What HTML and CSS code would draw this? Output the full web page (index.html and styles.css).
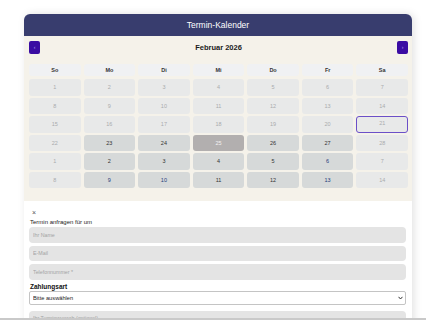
FILE: index.html
```html
<!DOCTYPE html>
<html>
<head>
    <title>Termin-Kalender</title>
    <meta name="viewport" content="width=device-width, initial-scale=1.0">
    <link rel="stylesheet" href="styles.css">
</head>
<body>
    <div class="booking">
        <div class="booking-header">Termin-Kalender</div>

        <!-- Calendar -->
        <div class="calendar">
            <div class="cal-nav">
                <button class="nav-btn">&lsaquo;</button>
                <span class="cal-title">Februar 2026</span>
                <button class="nav-btn">&rsaquo;</button>
            </div>
            <div class="cal-grid">
                <div class="day-head">So</div>
                <div class="day-head">Mo</div>
                <div class="day-head">Di</div>
                <div class="day-head">Mi</div>
                <div class="day-head">Do</div>
                <div class="day-head">Fr</div>
                <div class="day-head">Sa</div>

                <div class="day">1</div>
                <div class="day">2</div>
                <div class="day">3</div>
                <div class="day">4</div>
                <div class="day">5</div>
                <div class="day">6</div>
                <div class="day">7</div>

                <div class="day">8</div>
                <div class="day">9</div>
                <div class="day">10</div>
                <div class="day">11</div>
                <div class="day">12</div>
                <div class="day">13</div>
                <div class="day">14</div>

                <div class="day">15</div>
                <div class="day">16</div>
                <div class="day">17</div>
                <div class="day">18</div>
                <div class="day">19</div>
                <div class="day">20</div>
                <div class="day today">21</div>

                <div class="day">22</div>
                <div class="day open">23</div>
                <div class="day open">24</div>
                <div class="day selected">25</div>
                <div class="day open">26</div>
                <div class="day open">27</div>
                <div class="day">28</div>

                <div class="day">1</div>
                <div class="day open">2</div>
                <div class="day open">3</div>
                <div class="day open">4</div>
                <div class="day open">5</div>
                <div class="day open blue">6</div>
                <div class="day">7</div>

                <div class="day">8</div>
                <div class="day open blue">9</div>
                <div class="day open blue">10</div>
                <div class="day open">11</div>
                <div class="day open">12</div>
                <div class="day open blue">13</div>
                <div class="day">14</div>
            </div>
        </div>

        <!-- Request form -->
        <div class="request">
            <span class="close">&times;</span>
            <p class="request-title">Termin anfragen für um</p>
            <input class="field" type="text" placeholder="Ihr Name">
            <input class="field" type="text" placeholder="E-Mail">
            <input class="field" type="text" placeholder="Telefonnummer *">
            <label class="field-label">Zahlungsart</label>
            <div class="select-wrap">
                <select class="select">
                    <option>Bitte auswählen</option>
                </select>
                <svg class="select-arrow" width="5" height="4" viewBox="0 0 5 4">
                    <path d="M0.5 0.8 L2.5 3 L4.5 0.8" fill="none" stroke="#333" stroke-width="1"/>
                </svg>
            </div>
            <input class="field" type="text" placeholder="Ihr Terminwunsch (optional)">
        </div>
    </div>

    <div class="page-edge"></div>
</body>
</html>
```

FILE: styles.css
```css
:root {
    --navy: #383d6e;
    --purple: #3a0ca3;
    --beige: #f5f2ea;
}

body {
    margin: 0;
    font-family: "Liberation Sans", Arial, sans-serif;
    background: white;
}

.booking {
    margin: 14px 14px 0 24px;
    border-radius: 6px 6px 0 0;
    overflow: hidden;
    box-shadow: 2px 0 8px rgba(0,0,0,0.12);
}

.booking-header {
    background: var(--navy);
    color: white;
    font-size: 8.5px;
    height: 22px;
    line-height: 22px;
    text-align: center;
}

.calendar {
    background: var(--beige);
    padding: 5px 4px 13px 5px;
}

.cal-nav {
    display: flex;
    justify-content: space-between;
    align-items: center;
    margin-bottom: 10px;
}

.nav-btn {
    width: 11px;
    height: 13px;
    padding: 0;
    border: none;
    border-radius: 2px;
    background: var(--purple);
    color: #b9a8ee;
    font-size: 5px;
    line-height: 13px;
}

.cal-title {
    font-weight: bold;
    font-size: 7.5px;
    color: #1b1b1b;
}

.cal-grid {
    display: grid;
    grid-template-columns: repeat(7, 1fr);
    column-gap: 3px;
    row-gap: 2px;
}

.day-head {
    height: 12px;
    line-height: 12px;
    margin-bottom: 1px;
    background: #f0f1f3;
    border-radius: 3px;
    text-align: center;
    font-weight: bold;
    font-size: 5.5px;
    color: #333;
}

.day {
    height: 16.5px;
    line-height: 16.5px;
    background: #e8e9e9;
    border-radius: 3px;
    text-align: center;
    font-size: 5.5px;
    color: #a9abad;
    box-sizing: border-box;
}

.day.open {
    background: #d6d9d9;
    color: #333;
}

.day.blue {
    color: #1f3c7a;
}

.day.selected {
    background: #b2afaf;
    color: #f2f2f2;
}

.day.today {
    border: 1.5px solid #6b4fc8;
    line-height: 13.5px;
}

.request {
    padding: 8px 6px 0 5px;
}

.close {
    display: block;
    font-size: 7px;
    color: #555;
    margin-left: 3px;
    line-height: 8px;
}

.request-title {
    margin: 2px 0 2px 1px;
    font-size: 6px;
    color: #222;
}

.field {
    display: block;
    width: 100%;
    box-sizing: border-box;
    height: 15.5px;
    margin-bottom: 3px;
    padding: 0 4px;
    border: none;
    border-radius: 4px;
    background: #e4e4e4;
    font-family: inherit;
    font-size: 5.3px;
}

.field::placeholder {
    color: #a3a3a3;
}

.field-label {
    display: block;
    font-weight: bold;
    font-size: 6.5px;
    color: #111;
    margin: 1px 0 1px 1px;
}

.select-wrap {
    position: relative;
    margin-bottom: 6px;
}

.select {
    display: block;
    width: 100%;
    height: 14px;
    padding: 0 3px;
    border: 1px solid #c4c4c4;
    border-radius: 2px;
    background: white;
    font-family: inherit;
    font-size: 5.7px;
    color: #222;
    appearance: none;
    -webkit-appearance: none;
}

.select-arrow {
    position: absolute;
    right: 3px;
    top: 5px;
}

.page-edge {
    position: fixed;
    left: 0;
    right: 0;
    bottom: 0;
    height: 2px;
    background: #c9c9c9;
}
```
